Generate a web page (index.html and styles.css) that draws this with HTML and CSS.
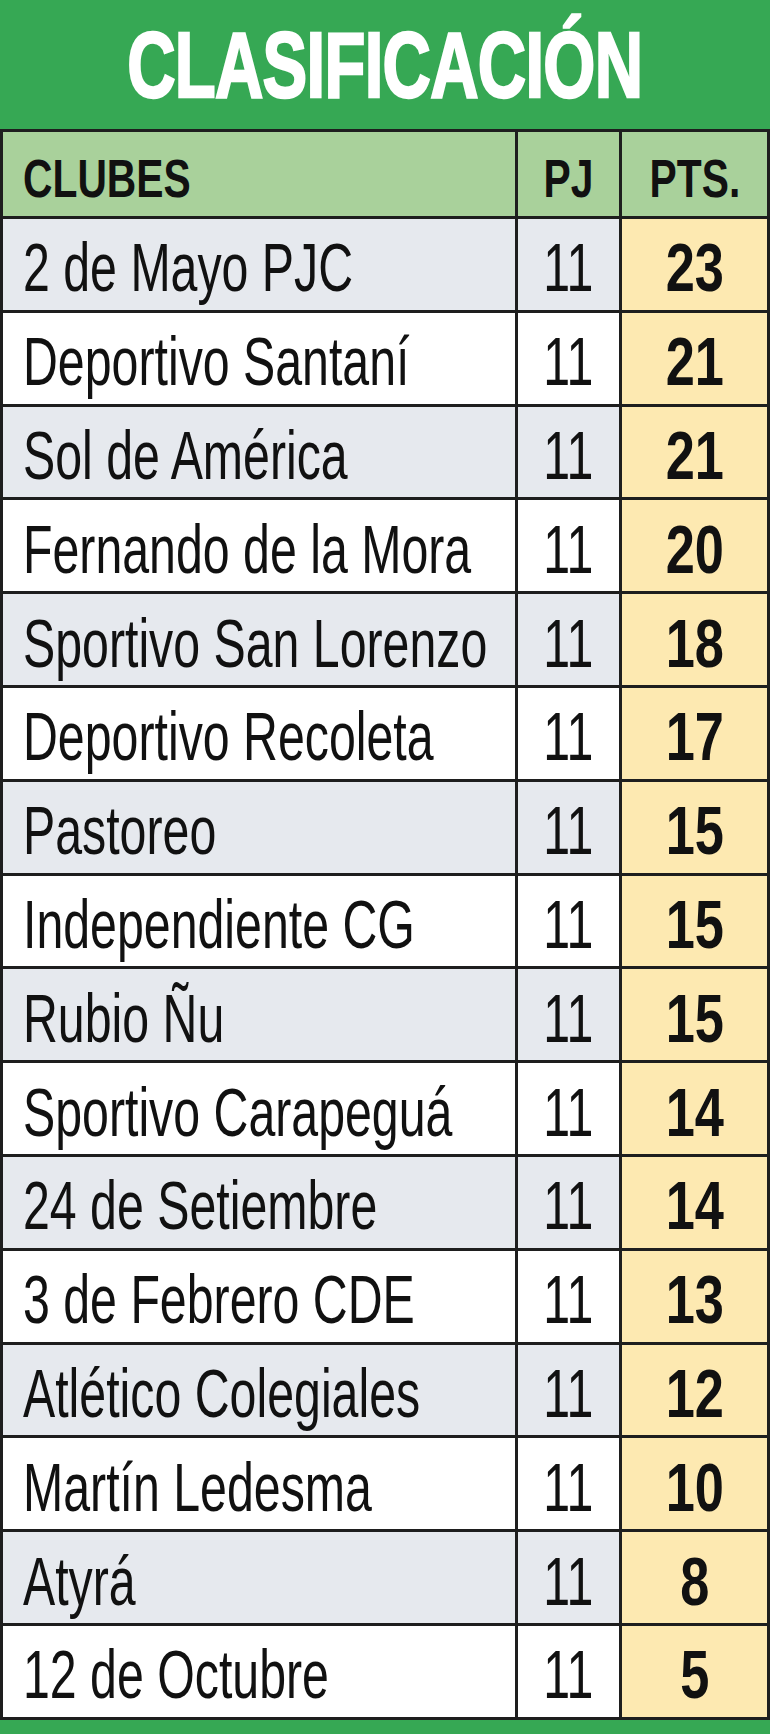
FILE: index.html
```html
<!DOCTYPE html>
<html lang="es">
<head>
<meta charset="utf-8">
<title>Clasificación</title>
<link rel="stylesheet" href="styles.css">
</head>
<body>
<div class="board">
  <h1 class="title"><span class="sq">CLASIFICACIÓN</span></h1>
  <div class="table">
    <div class="row head">
      <div class="cell club"><span class="sq-b">CLUBES</span></div>
      <div class="cell num"><span class="sq-b">PJ</span></div>
      <div class="cell num"><span class="sq-b">PTS.</span></div>
    </div>
    <div class="row odd"><div class="cell club"><span class="sq-l">2 de Mayo PJC</span></div><div class="cell num"><span class="sq-c">11</span></div><div class="cell num pts"><span class="sq-b">23</span></div></div>
    <div class="row even"><div class="cell club"><span class="sq-l">Deportivo Santaní</span></div><div class="cell num"><span class="sq-c">11</span></div><div class="cell num pts"><span class="sq-b">21</span></div></div>
    <div class="row odd"><div class="cell club"><span class="sq-l">Sol de América</span></div><div class="cell num"><span class="sq-c">11</span></div><div class="cell num pts"><span class="sq-b">21</span></div></div>
    <div class="row even"><div class="cell club"><span class="sq-l">Fernando de la Mora</span></div><div class="cell num"><span class="sq-c">11</span></div><div class="cell num pts"><span class="sq-b">20</span></div></div>
    <div class="row odd"><div class="cell club"><span class="sq-l">Sportivo San Lorenzo</span></div><div class="cell num"><span class="sq-c">11</span></div><div class="cell num pts"><span class="sq-b">18</span></div></div>
    <div class="row even"><div class="cell club"><span class="sq-l">Deportivo Recoleta</span></div><div class="cell num"><span class="sq-c">11</span></div><div class="cell num pts"><span class="sq-b">17</span></div></div>
    <div class="row odd"><div class="cell club"><span class="sq-l">Pastoreo</span></div><div class="cell num"><span class="sq-c">11</span></div><div class="cell num pts"><span class="sq-b">15</span></div></div>
    <div class="row even"><div class="cell club"><span class="sq-l">Independiente CG</span></div><div class="cell num"><span class="sq-c">11</span></div><div class="cell num pts"><span class="sq-b">15</span></div></div>
    <div class="row odd"><div class="cell club"><span class="sq-l">Rubio Ñu</span></div><div class="cell num"><span class="sq-c">11</span></div><div class="cell num pts"><span class="sq-b">15</span></div></div>
    <div class="row even"><div class="cell club"><span class="sq-l">Sportivo Carapeguá</span></div><div class="cell num"><span class="sq-c">11</span></div><div class="cell num pts"><span class="sq-b">14</span></div></div>
    <div class="row odd"><div class="cell club"><span class="sq-l">24 de Setiembre</span></div><div class="cell num"><span class="sq-c">11</span></div><div class="cell num pts"><span class="sq-b">14</span></div></div>
    <div class="row even"><div class="cell club"><span class="sq-l">3 de Febrero CDE</span></div><div class="cell num"><span class="sq-c">11</span></div><div class="cell num pts"><span class="sq-b">13</span></div></div>
    <div class="row odd"><div class="cell club"><span class="sq-l">Atlético Colegiales</span></div><div class="cell num"><span class="sq-c">11</span></div><div class="cell num pts"><span class="sq-b">12</span></div></div>
    <div class="row even"><div class="cell club"><span class="sq-l">Martín Ledesma</span></div><div class="cell num"><span class="sq-c">11</span></div><div class="cell num pts"><span class="sq-b">10</span></div></div>
    <div class="row odd"><div class="cell club"><span class="sq-l">Atyrá</span></div><div class="cell num"><span class="sq-c">11</span></div><div class="cell num pts"><span class="sq-b">8</span></div></div>
    <div class="row even"><div class="cell club"><span class="sq-l">12 de Octubre</span></div><div class="cell num"><span class="sq-c">11</span></div><div class="cell num pts"><span class="sq-b">5</span></div></div>
  </div>
  <div class="foot"></div>
</div>
</body>
</html>
```
FILE: styles.css
```css
html, body {
  margin: 0;
  padding: 0;
  background: #36a854;
}

.board {
  width: 770px;
  height: 1734px;
  display: flex;
  flex-direction: column;
  background: #36a854;
  font-family: "Liberation Sans", Arial, sans-serif;
  color: #111;
}

.title {
  margin: 0;
  height: 129px;
  display: flex;
  align-items: center;
  justify-content: center;
  padding-top: 2px;
  box-sizing: border-box;
  color: #fff;
  font-size: 93px;
  font-weight: 700;
  line-height: 1;
}

.title .sq {
  display: inline-block;
  transform: scaleX(0.72);
  transform-origin: center;
  -webkit-text-stroke: 2.5px #fff;
  letter-spacing: -1px;
  white-space: nowrap;
}

.table {
  display: grid;
  grid-template-columns: 512px 101px 145px;
  grid-template-rows: 84px repeat(16, 90.8px);
  gap: 3px;
  padding: 3px;
  background: #1e1e1e;
}

.row {
  display: contents;
}

.cell {
  display: flex;
  align-items: center;
  overflow: hidden;
  white-space: nowrap;
}

.club {
  justify-content: flex-start;
  padding-left: 20px;
}

.num {
  justify-content: center;
}

.head .cell {
  background: #a9d19b;
  font-size: 53px;
  font-weight: 700;
  padding-top: 9px;
}

.odd .cell {
  background: #e6e9ee;
}

.even .cell {
  background: #ffffff;
}

.row .pts {
  background: #fde9b1;
}

.odd .cell,
.even .cell {
  font-size: 68px;
  padding-top: 6px;
}

.sq-l {
  display: inline-block;
  transform: scaleX(0.71);
  transform-origin: left center;
}

.sq-c {
  display: inline-block;
  transform: scaleX(0.71);
  transform-origin: center;
}

.sq-b {
  display: inline-block;
  font-weight: 700;
  transform: scaleX(0.77);
  transform-origin: center;
}

.club .sq-b {
  transform-origin: left center;
}

.foot {
  flex: 1;
  background: #36a854;
}
```
